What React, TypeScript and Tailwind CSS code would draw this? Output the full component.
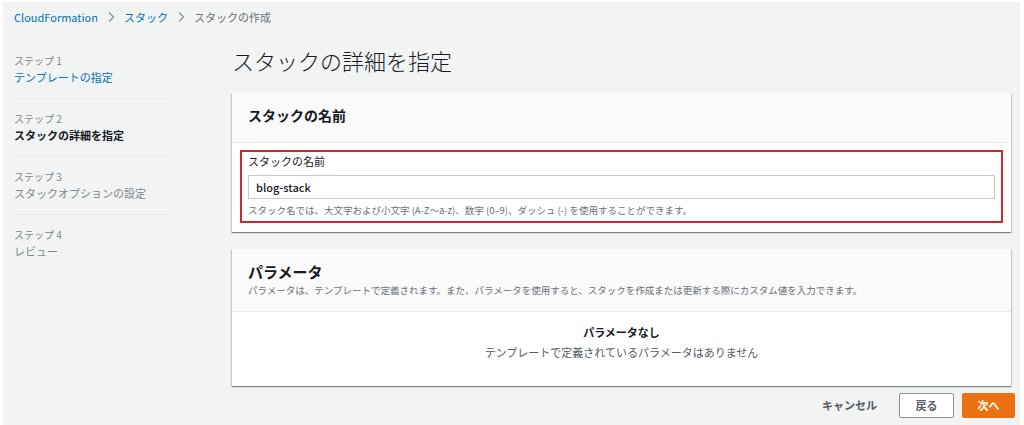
import React from "react";

const font = { fontFamily: '"Noto Sans CJK JP", "Noto Sans", sans-serif' };

function Step({ n, name, state, last }: { n: number; name: string; state: "done" | "current" | "todo"; last?: boolean }) {
  return (
    <div className={`pt-[12px] pb-[13px] ${last ? "" : "border-b border-[#e6e9e9]"}`}>
      <div className="text-[10px] leading-[16px] text-[#7d8790]">ステップ {n}</div>
      <div
        className={`text-[11px] leading-[16px] ${
          state === "done" ? "text-[#0073bb]" : state === "current" ? "font-bold text-[#16191f]" : "text-[#7d8790]"
        }`}
      >
        {name}
      </div>
    </div>
  );
}

const cardShadow =
  "shadow-[0_1px_1px_0_rgba(0,28,36,0.3),1px_1px_1px_0_rgba(0,28,36,0.15),-1px_1px_1px_0_rgba(0,28,36,0.15)]";

export default function App() {
  return (
    <div className="w-[1024px] h-[425px] bg-white pt-[2px] pl-[3px] pr-[4px] overflow-hidden" style={font}>
      <div className="h-[423px] bg-[#f2f3f3] pl-[11px] pr-[5px]">
        {/* breadcrumb */}
        <div className="h-[30px] pt-[8px] flex items-start text-[11px] leading-[14px]">
          <span className="text-[#0073bb]">CloudFormation</span>
          <span className="mx-[8px]">
            <svg width="10" height="14" viewBox="0 0 10 14" fill="none">
              <path d="M3 2.5 L7.5 7 L3 11.5" stroke="#879596" strokeWidth="1.3" />
            </svg>
          </span>
          <span className="text-[#0073bb]">スタック</span>
          <span className="mx-[8px]">
            <svg width="10" height="14" viewBox="0 0 10 14" fill="none">
              <path d="M3 2.5 L7.5 7 L3 11.5" stroke="#879596" strokeWidth="1.3" />
            </svg>
          </span>
          <span className="text-[#687078]">スタックの作成</span>
        </div>

        <div className="flex">
          {/* sidebar */}
          <div className="w-[156px] shrink-0 pt-[9px]">
            <Step n={1} name="テンプレートの指定" state="done" />
            <Step n={2} name="スタックの詳細を指定" state="current" />
            <Step n={3} name="スタックオプションの設定" state="todo" />
            <Step n={4} name="レビュー" state="todo" last />
          </div>

          {/* main */}
          <div className="ml-[62px] flex-1 flex flex-col">
            <h1 className="mt-[13px] h-[30px] text-[22px] leading-[30px] font-light text-[#16191f]">
              スタックの詳細を指定
            </h1>

            <div className={`mt-[18px] mr-[4px] bg-white ${cardShadow}`}>
              <div className="h-[50px] pt-[14px] px-[16px] bg-[#fafafa] border-b border-[#eaeded]">
                <h2 className="text-[14px] leading-[16px] font-bold text-[#16191f]">スタックの名前</h2>
              </div>
              <div className="pt-[7px] pb-[9px] px-[8px]">
                <div className="border-2 border-[#d0262d] pt-[3px] pb-[5px] px-[6px]">
                  <div className="text-[11px] leading-[12px] text-[#16191f]">スタックの名前</div>
                  <div className="mt-[8px] h-[24px] border border-[#c0c8c9] bg-white flex items-center px-[7px] text-[11px] font-medium text-[#16191f]">
                    blog-stack
                  </div>
                  <div className="mt-[5px] text-[9.5px] leading-[12px] text-[#687078]">
                    スタック名では、大文字および小文字 (A-Z〜a-z)、数字 (0–9)、ダッシュ (-) を使用することができます。
                  </div>
                </div>
              </div>
            </div>

            <div className={`mt-[17px] mr-[4px] bg-white ${cardShadow}`}>
              <div className="h-[63px] pt-[14px] px-[16px] bg-[#fafafa] border-b border-[#eaeded]">
                <h2 className="text-[15px] leading-[18px] font-bold text-[#16191f]">パラメータ</h2>
                <p className="mt-[3px] text-[9.5px] leading-[12px] text-[#687078]">
                  パラメータは、テンプレートで定義されます。また、パラメータを使用すると、スタックを作成または更新する際にカスタム値を入力できます。
                </p>
              </div>
              <div className="h-[74px] pt-[13px] flex flex-col items-center">
                <div className="text-[11px] leading-[14px] font-bold text-[#16191f]">パラメータなし</div>
                <div className="mt-[6px] text-[11px] leading-[14px] text-[#545b64]">
                  テンプレートで定義されているパラメータはありません
                </div>
              </div>
            </div>

            <div className="mt-[7px] flex justify-end items-center">
              <button className="text-[11px] font-bold text-[#545b64] mr-[22px]">キャンセル</button>
              <button className="w-[55px] h-[25px] border border-[#8a9299] bg-white text-[11px] font-bold text-[#545b64] rounded-[2px]">
                戻る
              </button>
              <button className="ml-[8px] w-[53px] h-[25px] bg-[#ec7211] text-[11px] font-bold text-white rounded-[2px]">
                次へ
              </button>
            </div>
          </div>
        </div>
      </div>
    </div>
  );
}
